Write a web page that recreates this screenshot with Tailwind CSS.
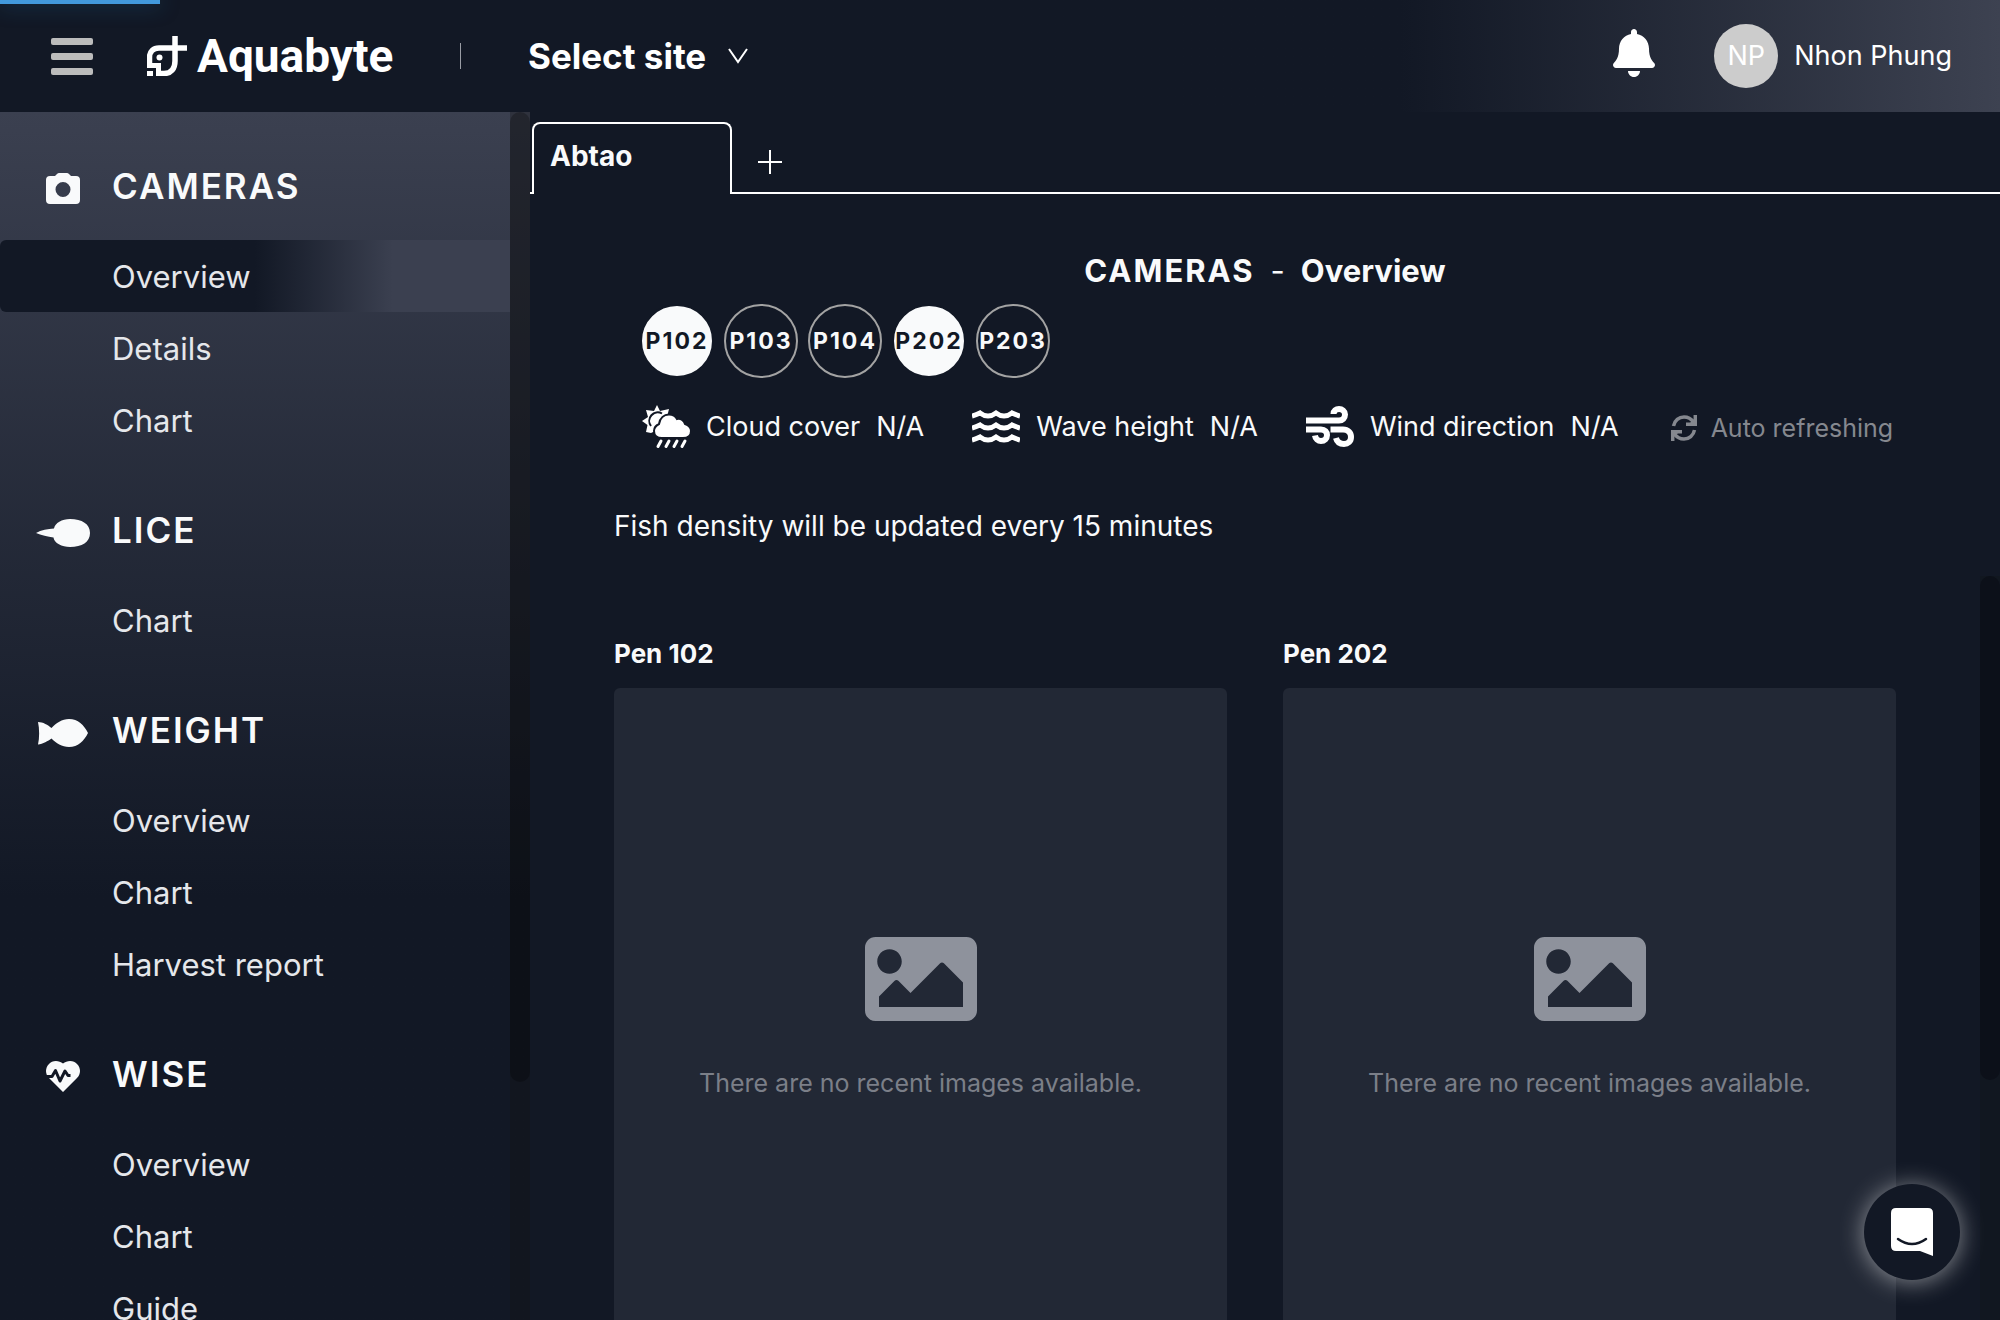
<!DOCTYPE html>
<html lang="en">
<head>
<meta charset="utf-8">
<title>Aquabyte - Cameras Overview</title>
<script src="https://cdn.jsdelivr.net/npm/@tailwindcss/browser@4"></script>
</head>
<body class="flex h-screen flex-col overflow-hidden bg-[#121825] font-[Inter,sans-serif] text-[28px] leading-10 text-[#f9fafb]">

<div class="absolute left-0 top-0 h-1 w-[8%] bg-[#4299dc] shadow-[0_0_20px_#29d]/50" role="progressbar" aria-label="Loading"></div>

<header class="flex h-28 shrink-0 items-center bg-linear-to-r from-[#121825] from-70% to-[#3d4251] pl-[50px] pr-12 text-white">
  <button class="flex h-11 w-11 flex-col items-center justify-center gap-2" aria-label="Menu">
    <span class="h-[7px] w-[42px] rounded-xs bg-[#bcbcbc]"></span>
    <span class="h-[7px] w-[42px] rounded-xs bg-[#bcbcbc]"></span>
    <span class="h-[7px] w-[42px] rounded-xs bg-[#bcbcbc]"></span>
  </button>
  <a href="#" class="ml-[53px] flex w-[248px] items-center gap-[10px]">
    <svg class="h-10 w-10 shrink-0" viewBox="0 0 40 40" fill="none" stroke="#fff" aria-hidden="true">
      <path d="M2.500 31V21.500C2.500 15.500 6.500 12 12 12H40" stroke-width="5.500"/>
      <path d="M28 0V25C28 33 24 37.500 17 37.500H9" stroke-width="5.500"/>
      <path d="M0 29.500H11.500V39" stroke-width="5"/>
      <path d="M0 35H6V40H0Z" fill="#fff" stroke="none"/>
      <circle cx="12.500" cy="21.500" r="3" fill="#fff" stroke="none"/>
    </svg>
    <span class="font-[Roboto,sans-serif] text-[46px] font-bold leading-[56px]">Aquabyte</span>
  </a>
  <span class="ml-[65px] h-[26px] w-px bg-[#9a9da5]"></span>
  <button class="ml-[67px] flex items-center gap-[22px] text-[35px] font-bold leading-[48px]">Select site
    <svg class="h-4 w-5" viewBox="0 0 20 16" fill="none" stroke="#fff" stroke-width="2" aria-hidden="true"><path d="M1 1L10 14L19 1"/></svg>
  </button>
  <button class="ml-auto pb-[6px]" aria-label="Notifications">
    <svg class="h-12 w-[42px]" viewBox="0 0 448 512" fill="#fff"><path d="M224 512c35.32 0 63.97-28.65 63.97-64H160.03c0 35.35 28.65 64 63.97 64zm215.39-149.71c-19.32-20.76-55.47-51.99-55.47-154.29 0-77.7-54.48-139.9-127.94-155.16V32c0-17.67-14.32-32-31.98-32s-31.98 14.33-31.98 32v20.84C118.56 68.1 64.08 130.3 64.08 208c0 102.3-36.15 133.53-55.47 154.29-6 6.45-8.66 14.16-8.61 21.71.11 16.4 12.98 32 32.1 32h383.8c19.12 0 32-15.6 32.1-32 .05-7.55-2.61-15.27-8.61-21.71z"/></svg>
  </button>
  <button class="ml-[59px] flex items-center gap-4 text-[27px]">
    <span class="flex size-16 items-center justify-center rounded-full bg-[#ccc]">NP</span>
    <span>Nhon Phung</span>
  </button>
</header>

<div class="flex min-h-0 flex-1">
  <aside class="flex w-[530px] shrink-0 overflow-hidden bg-linear-to-b from-[#3b4050] to-[#121825] to-65%">
    <nav class="flex-1 text-[31px] leading-[70px] text-[#e5e7eb]" aria-label="Main">
      <section>
        <h2 class="flex items-center gap-[22px] pb-[26px] pl-9 pt-[46px] text-[35px] font-semibold leading-[56px] tracking-[2px] text-[#f9fafb]">
          <svg class="mt-1 h-8 w-[54px]" viewBox="0 0 54 32" fill="#f9fafb" aria-hidden="true"><path fill-rule="evenodd" d="M14 4H19L21 2Q22 1 23 1H31Q32 1 33 2L35 4H40Q44 4 44 8V28Q44 32 40 32H14Q10 32 10 28V8Q10 4 14 4ZM27 10A7.500 7.500 0 1 0 27 25A7.500 7.500 0 1 0 27 10Z"/></svg>
          CAMERAS</h2>
        <a href="#" aria-current="page" class="block rounded-l-md bg-linear-to-r from-[#121825] from-50% to-[#3b4050] to-77% pl-28 pt-[2px]">Overview</a>
        <a href="#" class="block pl-28 pt-[2px]">Details</a>
        <a href="#" class="block pl-28 pt-[2px]">Chart</a>
      </section>
      <section>
        <h2 class="flex items-center gap-[22px] pb-[26px] pl-9 pt-[46px] text-[35px] font-semibold leading-[56px] tracking-[2px] text-[#f9fafb]">
          <svg class="mt-1 h-8 w-[54px]" viewBox="0 0 54 32" fill="#f9fafb" aria-hidden="true"><path d="M0 17C5 14 12 13 18 12.500C19 7 26 3 34 3C46 3 54 8 54 17C54 26 46 31 34 31C26 31 18 27 17.500 21.500C12 20.500 5 19.500 0 17Z"/></svg>
          LICE</h2>
        <a href="#" class="block pl-28 pt-[2px]">Chart</a>
      </section>
      <section>
        <h2 class="flex items-center gap-[22px] pb-[26px] pl-9 pt-[46px] text-[35px] font-semibold leading-[56px] tracking-[2px] text-[#f9fafb]">
          <svg class="mt-1 h-8 w-[54px]" viewBox="0 0 54 32" fill="#f9fafb" aria-hidden="true"><path d="M2 6C7 6 12 9 15.500 12C20 7 26 3 33 3C42 3 48 9 52 17C48 25 42 31 33 31C26 31 20 27 15.500 22.500C12 25 7 28 2 28.500C3.500 22 3.500 13 2 6Z"/></svg>
          WEIGHT</h2>
        <a href="#" class="block pl-28 pt-[2px]">Overview</a>
        <a href="#" class="block pl-28 pt-[2px]">Chart</a>
        <a href="#" class="block pl-28 pt-[2px]">Harvest report</a>
      </section>
      <section>
        <h2 class="flex items-center gap-[22px] pb-[26px] pl-9 pt-[46px] text-[35px] font-semibold leading-[56px] tracking-[2px] text-[#f9fafb]">
          <svg class="mt-1 h-8 w-[54px]" viewBox="0 0 54 32" fill="none" aria-hidden="true"><path fill="#f9fafb" d="M27 3.500C31 0 38 0 41 4C45 8 45 14 41 18L27 32L13 18C9 14 9 8 13 4C16 0 23 0 27 3.500Z"/><path d="M9 16.500H16L19.500 10.500L24 21L29 11L32 15.500H34.500" stroke="#121825" stroke-width="3" stroke-linejoin="round"/></svg>
          WISE</h2>
        <a href="#" class="block pl-28 pt-[2px]">Overview</a>
        <a href="#" class="block pl-28 pt-[2px]">Chart</a>
        <a href="#" class="block pl-28 pt-[2px]">Guide</a>
      </section>
    </nav>
    <div class="w-5 bg-[#151515]/30" aria-hidden="true"><div class="h-[970px] rounded-full bg-black/25"></div></div>
  </aside>

  <main class="flex min-w-0 flex-1 flex-col">
    <div class="flex h-[82px] shrink-0 items-end">
      <span class="w-[2px] border-b-2 border-white"></span>
      <button class="flex h-18 w-[200px] rounded-t-lg border-2 border-b-0 border-white pl-4 pt-3 text-[28px] font-bold">Abtao</button>
      <button class="flex h-18 flex-1 border-b-2 border-white pl-[26px] pt-7" aria-label="Add tab">
        <svg class="size-6" viewBox="0 0 24 24" stroke="#fff" stroke-width="2"><path d="M12 0V24M0 12H24"/></svg>
      </button>
    </div>

    <h1 class="flex shrink-0 items-center justify-center gap-4 pt-[57px] text-[31px] font-bold leading-10">
      <span class="tracking-[2px]">CAMERAS</span><span class="font-normal">-</span><span>Overview</span>
    </h1>

    <div class="flex h-[100px] shrink-0 items-center gap-[10px] pl-[110px] text-[23px] font-bold tracking-[2px]">
      <button aria-pressed="true" class="flex size-[74px] items-center justify-center rounded-full border-2 border-[#121825] bg-[#f9fafb] text-[#121825]">P102</button>
      <button class="flex size-[74px] items-center justify-center rounded-full border-2 border-[#a3a3a3]">P103</button>
      <button class="flex size-[74px] items-center justify-center rounded-full border-2 border-[#a3a3a3]">P104</button>
      <button aria-pressed="true" class="flex size-[74px] items-center justify-center rounded-full border-2 border-[#121825] bg-[#f9fafb] text-[#121825]">P202</button>
      <button class="flex size-[74px] items-center justify-center rounded-full border-2 border-[#a3a3a3]">P203</button>
    </div>

    <div class="flex h-[72px] shrink-0 items-center gap-12 pl-28 text-[27px]">
      <div class="flex items-center gap-4">
        <svg class="h-11 w-12" viewBox="0 0 48 44" aria-hidden="true">
          <path fill="#fff" d="M15 0L18 6L27 4L25 12L30 18L9 28L4 27L5.500 20L0 16L6 12L4 5L12 6Z"/>
          <path fill="none" stroke="#121825" stroke-width="2" d="M9 21A8.500 8.500 0 0 1 20 8.500"/>
          <path fill="#fff" stroke="#121825" stroke-width="2" d="M20 33C15 33 12 30 12 26C12 22 15 20 17 19C18 13 22 9.500 27 9.500C31 9.500 34 12 35 14C39 13 42 16 43 19C46 20 49 22 49 26C49 31 45 33 41 33Z"/>
          <path stroke="#fff" stroke-width="3" stroke-linecap="round" d="M19 36L16 41.500M27 36L24 41.500M35 36L32 41.500M43 36L40 41.500"/>
        </svg>
        <span>Cloud cover</span><span>N/A</span>
      </div>
      <div class="flex items-center gap-4">
        <svg class="h-11 w-12" viewBox="0 0 48 44" fill="none" stroke="#fff" stroke-width="5" aria-hidden="true">
          <path d="M0 11Q4 10 8 8Q12 11 16 11Q20 11 24 8Q28 11 32 11Q36 11 40 8Q44 10 48 11"/>
          <path d="M0 23Q4 22 8 20Q12 23 16 23Q20 23 24 20Q28 23 32 23Q36 23 40 20Q44 22 48 23"/>
          <path d="M0 35Q4 34 8 32Q12 35 16 35Q20 35 24 32Q28 35 32 35Q36 35 40 32Q44 34 48 35"/>
        </svg>
        <span>Wave height</span><span>N/A</span>
      </div>
      <div class="flex items-center gap-4">
        <svg class="h-11 w-12" viewBox="0 0 48 44" fill="none" stroke="#fff" stroke-width="6" aria-hidden="true">
          <path d="M0 15.500H33C36.500 15.500 39 13 39 9.500C39 6 36 4 33 4C30 4 27.500 6 27.500 9"/>
          <path d="M0 24.500H15C19 24.500 21 27 21 30C21 33.500 18.500 36 15 36C12 36 9.500 34 9 30.500"/>
          <path d="M24.500 24.500H37C42 24.500 45 27.500 45 32C45 36.500 42 39 38 39C34 39 31 37 30 33"/>
        </svg>
        <span>Wind direction</span><span>N/A</span>
      </div>
      <div class="flex items-center gap-[14px] pl-1 pt-[2px] text-[25px] text-[#85888f]">
        <svg class="size-[26px]" viewBox="0 0 26 26" fill="none" stroke="#85888f" stroke-width="3.500" aria-hidden="true">
          <path d="M2.500 11C3.500 5.500 8 2 13 2C17 2 20 3.500 22.500 7"/><path d="M24.300 0V9.300H15"/><path fill="#85888f" stroke="none" d="M24 3V10H17Z"/>
          <path d="M23.500 15C22.500 20.500 18 24 13 24C9 24 6 22.500 3.500 19"/><path d="M1.700 26V16.700H11"/><path fill="#85888f" stroke="none" d="M2 23V16H9Z"/>
        </svg>
        <span>Auto refreshing</span>
      </div>
    </div>

    <p class="shrink-0 pl-[84px] pt-[43px]">Fish density will be updated every 15 minutes</p>

    <div class="mt-[30px] flex min-h-0 flex-1 overflow-hidden">
      <div class="grid flex-1 grid-cols-2 gap-14 pl-[84px] pr-[84px] pt-[58px]">
        <section class="flex flex-col gap-[14px]">
          <h3 class="text-[26px] font-bold leading-10">Pen 102</h3>
          <div class="flex h-[800px] flex-col items-center rounded-md bg-[#222835] pt-[249px]">
            <svg class="h-[84px] w-28" viewBox="0 64 512 384" fill="#8e929c" aria-hidden="true"><path d="M464 448H48c-26.510 0-48-21.490-48-48V112c0-26.510 21.490-48 48-48h416c26.510 0 48 21.490 48 48v288c0 26.510-21.490 48-48 48zM112 120c-30.928 0-56 25.072-56 56s25.072 56 56 56 56-25.072 56-56-25.072-56-56-56zM64 384h384V272l-87.515-87.515c-4.686-4.686-12.284-4.686-16.971 0L208 320l-55.515-55.515c-4.686-4.686-12.284-4.686-16.971 0L64 336v48z"/></svg>
            <p class="pt-[42px] text-[25px] text-[#7b7f88]">There are no recent images available.</p>
          </div>
        </section>
        <section class="flex flex-col gap-[14px]">
          <h3 class="text-[26px] font-bold leading-10">Pen 202</h3>
          <div class="flex h-[800px] flex-col items-center rounded-md bg-[#222835] pt-[249px]">
            <svg class="h-[84px] w-28" viewBox="0 64 512 384" fill="#8e929c" aria-hidden="true"><path d="M464 448H48c-26.510 0-48-21.490-48-48V112c0-26.510 21.490-48 48-48h416c26.510 0 48 21.490 48 48v288c0 26.510-21.490 48-48 48zM112 120c-30.928 0-56 25.072-56 56s25.072 56 56 56 56-25.072 56-56-25.072-56-56-56zM64 384h384V272l-87.515-87.515c-4.686-4.686-12.284-4.686-16.971 0L208 320l-55.515-55.515c-4.686-4.686-12.284-4.686-16.971 0L64 336v48z"/></svg>
            <p class="pt-[42px] text-[25px] text-[#7b7f88]">There are no recent images available.</p>
          </div>
        </section>
      </div>
      <div class="w-5 bg-[#111720]" aria-hidden="true"><div class="h-[504px] rounded-full bg-[#0c1019]"></div></div>
    </div>
  </main>
</div>

<button class="absolute bottom-10 right-10 flex size-24 items-center justify-center rounded-full bg-[#121825] shadow-[0_2px_24px_#ffffff80]" aria-label="Open chat">
  <svg class="h-12 w-[42px]" viewBox="0 0 42 48" aria-hidden="true"><path fill="#fff" d="M5 0H37Q42 0 42 5V48L29 43H5Q0 43 0 38V5Q0 0 5 0Z"/><path fill="none" stroke="#121825" stroke-width="2.500" stroke-linecap="round" d="M7 31Q21 41 35 31"/></svg>
</button>
</body>
</html>
